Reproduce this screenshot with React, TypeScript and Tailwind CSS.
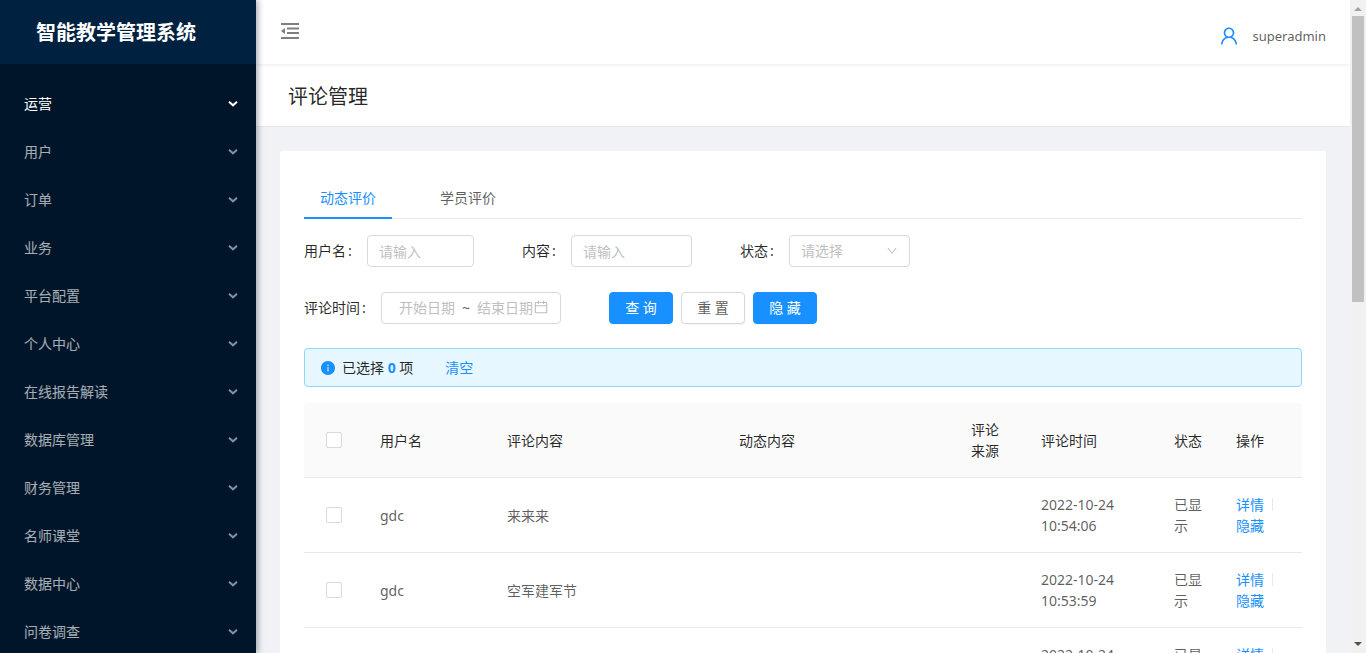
import { useState } from 'react';
import {
  AiFillInfoCircle,
  AiOutlineCalendar,
  AiOutlineDown,
  AiOutlineUser,
} from 'react-icons/ai';

type TabType = 'moment' | 'student';

interface Comment {
  id: number;
  user: string;
  content: string;
  moment: string;
  source: string;
  time: string;
  status: string;
}

const menus = [
  '运营',
  '用户',
  '订单',
  '业务',
  '平台配置',
  '个人中心',
  '在线报告解读',
  '数据库管理',
  '财务管理',
  '名师课堂',
  '数据中心',
  '问卷调查',
];

const tabs: { id: TabType; label: string }[] = [
  { id: 'moment', label: '动态评价' },
  { id: 'student', label: '学员评价' },
];

const comments: Comment[] = [
  { id: 1, user: 'gdc', content: '来来来', moment: '', source: '', time: '2022-10-24 10:54:06', status: '已显示' },
  { id: 2, user: 'gdc', content: '空军建军节', moment: '', source: '', time: '2022-10-24 10:53:59', status: '已显示' },
  { id: 3, user: 'gdc', content: '', moment: '', source: '', time: '2022-10-24 10:53:51', status: '已显示' },
];

const inputClass =
  'h-8 rounded border border-[#d9d9d9] bg-white px-[11px] text-black/65 outline-none placeholder:text-[#bfbfbf] focus:border-[#40a9ff]';
const checkboxClass =
  'block mx-auto size-4 appearance-none rounded-xs border border-[#d9d9d9] bg-white checked:border-[#1890ff] checked:bg-[#1890ff]';
const primaryButton =
  'h-8 w-16 rounded border border-[#1890ff] bg-[#1890ff] pb-0.5 text-white shadow-xs hover:bg-[#40a9ff]';

function FieldLabel({ htmlFor, text }: { htmlFor: string; text: string }) {
  return (
    <label htmlFor={htmlFor} className="flex shrink-0 pb-0.5 text-black/85">
      {text}
      <span className="w-[21px] pl-0.5">:</span>
    </label>
  );
}

function Sidebar() {
  const [active, setActive] = useState(menus[0]);

  return (
    <aside className="relative z-10 w-64 shrink-0 overflow-hidden bg-[#001529] shadow-[2px_0_6px_rgba(0,21,41,0.35)]">
      <div className="flex h-16 items-center bg-[#002140] pt-0.5 pl-9">
        <h1 className="text-xl font-bold text-white">智能教学管理系统</h1>
      </div>
      <nav className="pt-[15px]">
        {menus.map((name) => (
          <button
            key={name}
            onClick={() => setActive(name)}
            className={`flex h-12 w-full items-center justify-between pr-[18px] pl-6 hover:text-white ${
              active === name ? 'text-white' : 'text-white/65'
            }`}
          >
            {name}
            <svg
              className={`h-[7px] w-[10px] ${active === name ? '' : 'opacity-80'}`}
              viewBox="0 0 10 7"
              fill="none"
              stroke="currentColor"
              strokeWidth={2}
            >
              <path d="M1 1.7 5 5.3 9 1.7" />
            </svg>
          </button>
        ))}
      </nav>
    </aside>
  );
}

function SearchForm() {
  return (
    <form className="flex flex-col gap-[25px]" onSubmit={(e) => e.preventDefault()}>
      <div className="flex items-center gap-12">
        <div className="flex items-center">
          <FieldLabel htmlFor="user" text="用户名" />
          <input id="user" placeholder="请输入" className={`w-[107px] ${inputClass}`} />
        </div>
        <div className="flex items-center">
          <FieldLabel htmlFor="content" text="内容" />
          <input id="content" placeholder="请输入" className={`w-[121px] ${inputClass}`} />
        </div>
        <div className="flex items-center">
          <FieldLabel htmlFor="status" text="状态" />
          <div className="relative">
            <select
              id="status"
              defaultValue=""
              className="h-8 w-[121px] appearance-none rounded border border-[#d9d9d9] bg-white px-[11px] pb-0.5 text-[#bfbfbf] outline-none"
            >
              <option value="">请选择</option>
            </select>
            <AiOutlineDown className="pointer-events-none absolute top-[10px] right-3 size-3 text-[#bfbfbf]" />
          </div>
        </div>
      </div>

      <div className="flex items-center gap-12">
        <div className="flex items-center">
          <FieldLabel htmlFor="start" text="评论时间" />
          <div className="relative flex h-8 w-[180px] items-center rounded border border-[#d9d9d9] px-[10px] pb-0.5">
            <input
              id="start"
              placeholder="开始日期"
              className="w-[70px] text-center outline-none placeholder:text-[#bfbfbf]"
            />
            <span className="w-2 text-center">~</span>
            <input
              aria-label="结束日期"
              placeholder="结束日期"
              className="w-[70px] text-center outline-none placeholder:text-[#bfbfbf]"
            />
            <AiOutlineCalendar className="pointer-events-none absolute right-[11px] size-4 text-[#bfbfbf]" />
          </div>
        </div>
        <div className="flex gap-2">
          <button type="submit" className={primaryButton}>查 询</button>
          <button
            type="reset"
            className="h-8 w-16 rounded border border-[#d9d9d9] bg-white pb-0.5 shadow-xs hover:text-[#40a9ff]"
          >
            重 置
          </button>
          <button type="button" className={primaryButton}>隐 藏</button>
        </div>
      </div>
    </form>
  );
}

function CommentsTable() {
  return (
    <table className="w-full table-fixed text-left">
      <colgroup>
        <col className="w-[60px]" />
        <col className="w-[127px]" />
        <col />
        <col />
        <col className="w-[70px]" />
        <col className="w-[133px]" />
        <col className="w-[62px]" />
        <col className="w-[82px]" />
      </colgroup>
      <thead className="text-black/85">
        <tr className="border-b border-[#e8e8e8] bg-[#fafafa] *:p-4 *:font-normal">
          <th className="rounded-tl">
            <input type="checkbox" aria-label="全选" className={checkboxClass} />
          </th>
          <th>用户名</th>
          <th>评论内容</th>
          <th>动态内容</th>
          <th>评论来源</th>
          <th>评论时间</th>
          <th>状态</th>
          <th className="rounded-tr">操作</th>
        </tr>
      </thead>
      <tbody>
        {comments.map((comment) => (
          <tr key={comment.id} className="border-b border-[#e8e8e8] *:p-4">
            <td>
              <input type="checkbox" aria-label={comment.time} className={checkboxClass} />
            </td>
            <td>{comment.user}</td>
            <td>{comment.content}</td>
            <td>{comment.moment}</td>
            <td>{comment.source}</td>
            <td>{comment.time}</td>
            <td>{comment.status}</td>
            <td>
              <a href="#detail" className="text-[#1890ff]">详情</a>
              <span className="mx-2 inline-block h-[13px] w-px bg-[#e8e8e8] align-[-1px]" />
              <a href="#hide" className="text-[#1890ff]">隐藏</a>
            </td>
          </tr>
        ))}
      </tbody>
    </table>
  );
}

export default function App() {
  const [activeTab, setActiveTab] = useState<TabType>('moment');

  return (
    <div className="flex h-screen overflow-hidden bg-[#f0f2f5] font-['Noto_Sans','Noto_Sans_CJK_SC',sans-serif] text-sm/[21px] text-black/65">
      <Sidebar />

      <div className="min-w-0 flex-1 overflow-y-auto [scrollbar-width:none]">
        {/* Header */}
        <header className="relative flex h-16 items-center justify-between bg-white px-6 shadow-[0_1px_4px_rgba(0,21,41,0.08)]">
          <button aria-label="收起菜单" className="pb-0.5">
            <svg className="h-4 w-5" viewBox="0 0 20 16" fill="#7f7f7f">
              <path d="M1 0H19V2H1ZM7 4.5H19V6.5H7ZM7 9H19V11H7ZM1 14H19V16H1ZM1 8 5 5V11Z" />
            </svg>
          </button>
          <a href="#account" className="flex items-center gap-3 pt-2 text-[13px]">
            <AiOutlineUser className="size-[22px] text-[#1890ff]" />
            superadmin
          </a>
        </header>

        <div className="border-b border-[#e8e8e8] bg-white px-8 pt-[18px] pb-3.5">
          <h2 className="text-xl/[30px] text-black/85">评论管理</h2>
        </div>

        {/* Main content */}
        <main className="m-6 rounded-xs bg-white p-6">
          <div className="mb-4 flex h-11 gap-8 border-b border-[#e8e8e8]">
            {tabs.map((tab) => (
              <button
                key={tab.id}
                onClick={() => setActiveTab(tab.id)}
                className={`-mb-px border-b-2 px-4 pt-0.5 ${
                  activeTab === tab.id ? 'border-[#1890ff] text-[#1890ff]' : 'border-transparent'
                }`}
              >
                {tab.label}
              </button>
            ))}
          </div>

          <SearchForm />

          <div className="mt-6 mb-4 flex items-center gap-1.5 rounded border border-[#91d5ff] bg-[#e6f7ff] px-[15px] py-2 text-black/85">
            <AiFillInfoCircle className="size-4 text-[#1890ff]" />
            <span>
              已选择 <b className="text-[#1890ff]">0</b> 项
            </span>
            <button className="ml-[26px] text-[#1890ff]">清空</button>
          </div>

          <CommentsTable />
        </main>
      </div>

      {/* Page scrollbar */}
      <div className="flex w-4 shrink-0 flex-col items-center justify-between bg-[#f1f1f1]">
        <svg className="h-4 w-4 shrink-0" viewBox="0 0 16 16" fill="#a3a3a3">
          <path d="M4 11 8 7 12 11Z" />
        </svg>
        <div className="w-full grow px-0.5">
          <div className="h-[46%] bg-[#c1c1c1]" />
        </div>
        <svg className="h-4 w-4 shrink-0" viewBox="0 0 16 16" fill="#505050">
          <path d="M4 5 8 9 12 5Z" />
        </svg>
      </div>
    </div>
  );
}
